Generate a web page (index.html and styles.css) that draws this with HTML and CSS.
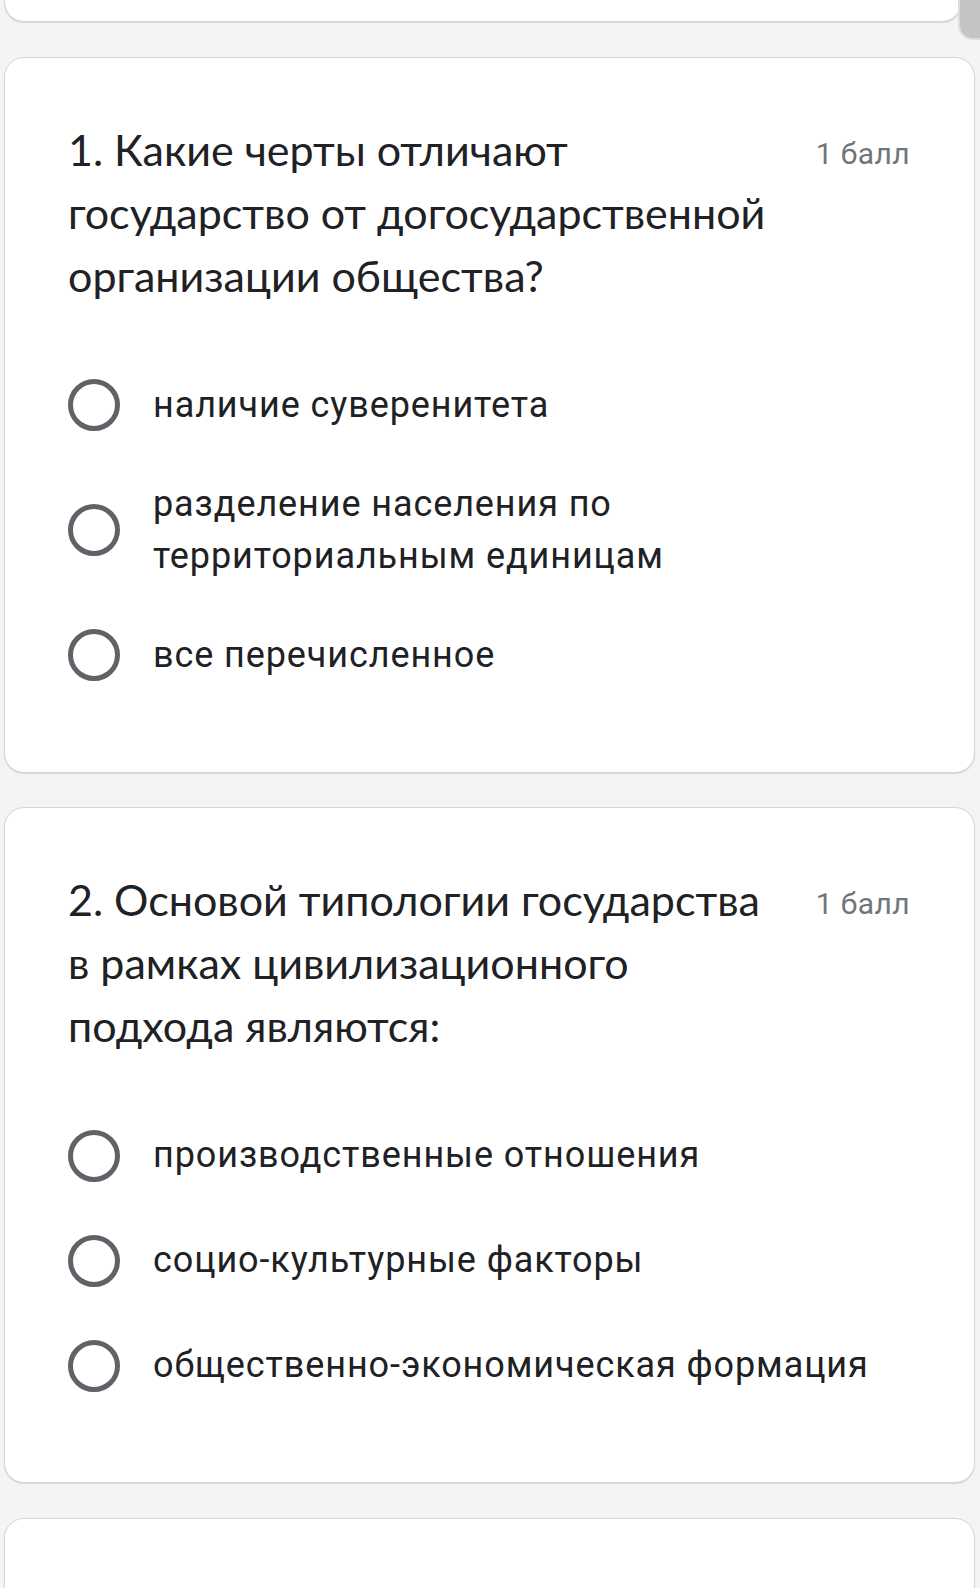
FILE: index.html
```html
<!DOCTYPE html>
<html lang="ru">
<head>
<meta charset="utf-8">
<title>Форма</title>
<link rel="stylesheet" href="styles.css">
</head>
<body>
<div class="page">
  <div class="card card-prev"></div>

  <div class="card question">
    <div class="q-head">
      <div class="q-title">1. Какие черты отличают государство от догосударственной организации общества?</div>
      <div class="q-points">1 балл</div>
    </div>
    <div class="options">
      <div class="option"><span class="radio"></span><span class="opt-text">наличие суверенитета</span></div>
      <div class="option"><span class="radio"></span><span class="opt-text">разделение населения по<br>территориальным единицам</span></div>
      <div class="option"><span class="radio"></span><span class="opt-text">все перечисленное</span></div>
    </div>
  </div>

  <div class="card question">
    <div class="q-head">
      <div class="q-title">2. Основой типологии государства в рамках цивилизационного подхода являются:</div>
      <div class="q-points">1 балл</div>
    </div>
    <div class="options">
      <div class="option"><span class="radio"></span><span class="opt-text">производственные отношения</span></div>
      <div class="option"><span class="radio"></span><span class="opt-text">социо-культурные факторы</span></div>
      <div class="option"><span class="radio"></span><span class="opt-text">общественно-экономическая формация</span></div>
    </div>
  </div>

  <div class="card card-next"></div>
  <div class="scroll-blob"></div>
</div>
</body>
</html>
```

FILE: styles.css
```css
html, body {
  margin: 0;
  padding: 0;
  background: #f4f4f4;
  overflow: hidden;
}

.page {
  position: relative;
  height: 1588px;
  padding: 0 5px 0 4px;
  display: flex;
  flex-direction: column;
  gap: 34.5px;
  box-sizing: border-box;
  font-family: Roboto, "Noto Sans", sans-serif;
  color: #202124;
}

.card {
  background: #fff;
  border: 1.5px solid #d6d6d6;
  border-radius: 20px;
  box-shadow: 0 1px 1px rgba(0, 0, 0, 0.12);
  flex-shrink: 0;
}

.card-prev {
  height: 21px;
  margin-right: 13px;
  border-top: none;
  border-radius: 0 0 20px 20px;
}

.card-next {
  height: 120px;
}

.question {
  padding: 60px 64px 64px 63px;
}

.q-head {
  display: flex;
  align-items: flex-start;
  justify-content: space-between;
}

.q-title {
  width: 710px;
  font-family: Lato, "Open Sans", sans-serif;
  font-size: 43px;
  line-height: 63px;
  color: #202124;
}

.q-points {
  font-family: Roboto, sans-serif;
  font-size: 30px;
  line-height: 63px;
  padding-top: 4px;
  color: #70757a;
  letter-spacing: 0.4px;
  white-space: nowrap;
}

.options {
  margin-top: 46px;
  display: flex;
  flex-direction: column;
}

.option {
  display: flex;
  align-items: center;
  min-height: 105px;
  padding: 20px 0;
  box-sizing: border-box;
}

.radio {
  width: 42px;
  height: 42px;
  border: 5px solid #5f6368;
  border-radius: 50%;
  flex-shrink: 0;
  margin-right: 33px;
}

.opt-text {
  font-size: 36px;
  line-height: 52.5px;
  letter-spacing: 0.9px;
  color: #202124;
}

.scroll-blob {
  position: absolute;
  right: -12px;
  top: -24px;
  width: 30px;
  height: 60px;
  border-radius: 15px;
  background: #c4c4c4;
  border: 2px solid #dcdcdc;
}
```
